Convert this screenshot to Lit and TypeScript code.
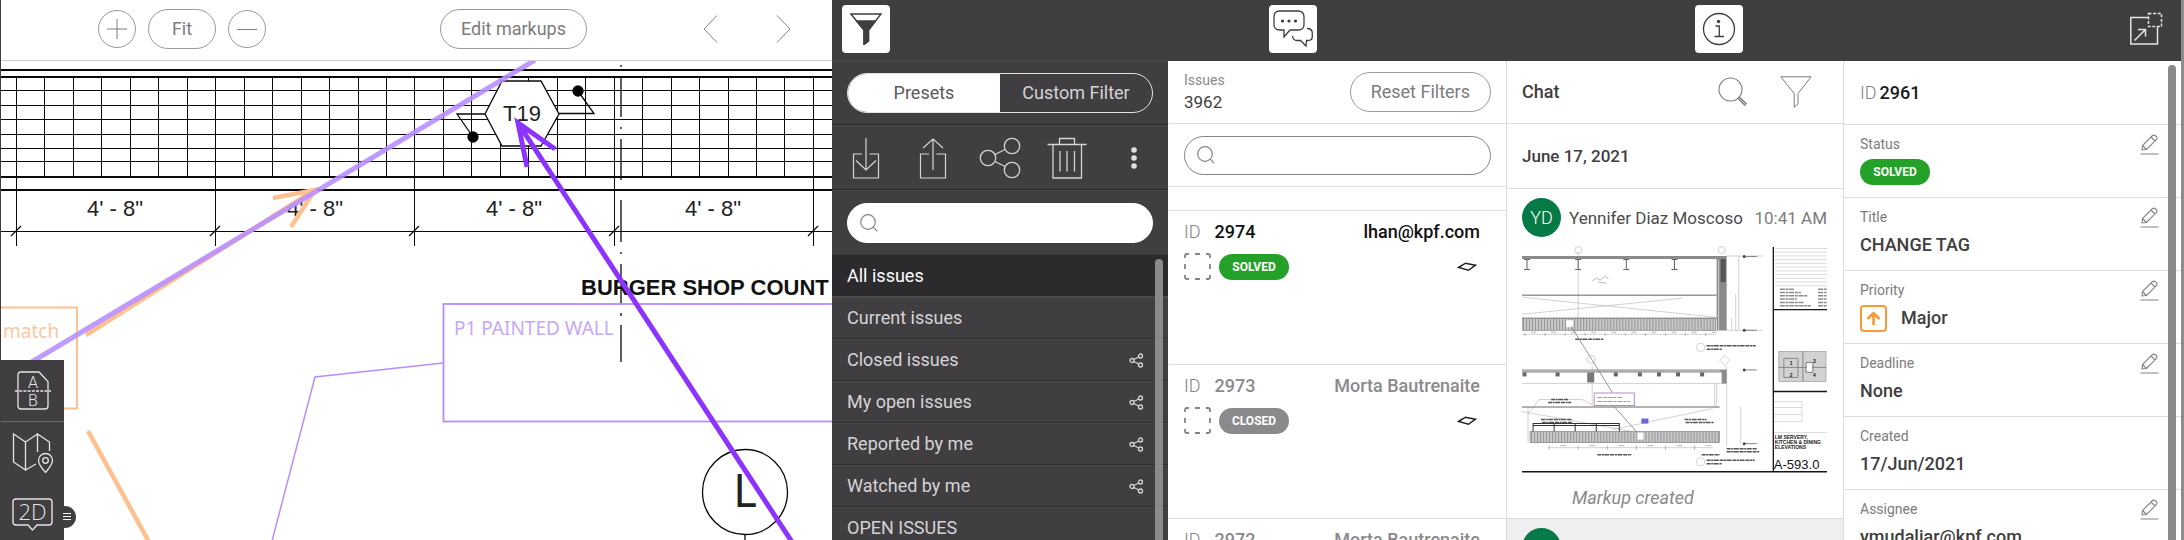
import { LitElement, html, svg, css } from "lit";
import { customElement, state } from "lit/decorators.js";
import { classMap } from "lit/directives/class-map.js";

const icons = {
  filterSolid: html`<svg width="32" height="32" viewBox="0 0 32 32" fill="none" stroke="#3f3d40" stroke-width="1.4">
    <path d="M1 1H31L18.5 17V28L14 31.5V17Z" />
    <path d="M6.5 8H25.5L18.5 17V28L14 31.5V17Z" fill="#3f3d40" />
  </svg>`,
  filter: html`<svg width="32" height="32" viewBox="0 0 32 32" fill="none" stroke="#7d7b7e" stroke-width="1">
    <path d="M.8 .8H31.2L18 17.5V28L14.2 31.2V17.5Z" />
  </svg>`,
  chat: html`<svg width="40" height="38" viewBox="0 0 40 38" fill="none" stroke="#3f3d40" stroke-width="1.3">
    <path d="M6.500 1H25Q31 1 31 7V14.500Q31 20 25 20H17L11 27V20H7Q1 20 1 14.500V7Q1 1 6.500 1Z" />
    <path d="M34 18.500Q39.300 18.500 39.300 23V26.500Q39.300 30.500 35 30.500H33.500L33 36L27.500 30.500H24Q20 30.500 19.500 26" />
    <g fill="#3f3d40" stroke="none"><circle cx="9.500" cy="11" r="1.600" /><circle cx="16" cy="11" r="1.600" /><circle cx="22.500" cy="11" r="1.600" /></g>
  </svg>`,
  info: html`<svg width="34" height="34" viewBox="0 0 34 34" fill="none" stroke="#3f3d40" stroke-width="1.3">
    <circle cx="17" cy="17" r="15.500" /><path d="M13.500 14H17.300V24.500M12.500 24.500H22" /><circle cx="16.500" cy="9.500" r="1.700" fill="#3f3d40" stroke="none" />
  </svg>`,
  expand: html`<svg width="34" height="34" viewBox="0 0 34 34" fill="none" stroke="#e4e2e5" stroke-width="1.500">
    <path d="M19.500 5.500H1.800V32H28.500V14.500" /><path d="M19.500 1.500H32.500V14.500H19.500Z" stroke-dasharray="3 1.600" />
    <path d="M5.500 28.500L16.500 17.500M9 17.500H16.500V24.500" />
  </svg>`,
  download: html`<svg width="28" height="42" viewBox="0 0 28 42" fill="none" stroke="#d5d3d6" stroke-width="1.200">
    <path d="M10 17H1.500V41H26.500V17H17.500M14 1V33M4 23.500L14 33L24 23.500" />
  </svg>`,
  upload: html`<svg width="28" height="42" viewBox="0 0 28 42" fill="none" stroke="#d5d3d6" stroke-width="1.200">
    <path d="M10 17H1.500V41H26.500V17H17.500M14 33V2M4 11L14 2L24 11" />
  </svg>`,
  share: html`<svg width="42" height="42" viewBox="0 0 42 42" fill="none" stroke="#d5d3d6" stroke-width="1.300">
    <circle cx="33" cy="9" r="7.700" /><circle cx="9" cy="21" r="7.700" /><circle cx="33" cy="33" r="7.700" /><path d="M16 17.500L26 12.500M16 24.500L26 29.500" />
  </svg>`,
  shareSmall: html`<svg width="15" height="15" viewBox="0 0 15 15" fill="none" stroke="#d5d3d6" stroke-width="1.300">
    <circle cx="11.500" cy="3" r="2" /><circle cx="3" cy="7.500" r="2" /><circle cx="11.500" cy="12" r="2" /><path d="M4.800 6.500L9.700 4M4.800 8.500L9.700 11" />
  </svg>`,
  trash: html`<svg width="40" height="42" viewBox="0 0 40 42" fill="none" stroke="#d5d3d6" stroke-width="1.300">
    <path d="M.5 7.500H39.500M12.500 7.500V1.500H27.500V7.500M6 7.500V41H34.500V7.500M13 14V34.500M20 14V34.500M27.500 14V34.500" />
  </svg>`,
  more: html`<svg width="8" height="24" viewBox="0 0 8 24" fill="#e0dee1"><circle cx="4" cy="4" r="2.800" /><circle cx="4" cy="12" r="2.800" /><circle cx="4" cy="20" r="2.800" /></svg>`,
  search: html`<svg width="18" height="18" viewBox="0 0 18 18" fill="none" stroke="#858386" stroke-width="1.200">
    <circle cx="8" cy="8" r="7.300" /><path d="M13.200 13.200L17.300 17.300" />
  </svg>`,
  searchBig: html`<svg width="30" height="30" viewBox="0 0 30 30" fill="none" stroke="#7d7b7e" stroke-width="1.100">
    <circle cx="12.500" cy="12.500" r="11.500" /><path d="M20.500 20.500L28 28" stroke-width="3.200" /><path d="M21 21L28 28" stroke="#d6d5d7" stroke-width="1" />
  </svg>`,
  pencil: html`<svg width="19" height="21" viewBox="0 0 19 21" fill="none" stroke="#858386" stroke-width="1.100">
    <path d="M2 16L2.500 11.500L12.500 1.500Q14 .5 15.500 1.800Q17.800 3.500 16.500 5.500L6.500 15.500ZM11 3L15 7M2.500 11.500L6.500 15.500M.5 20H18.500" />
  </svg>`,
  layer: html`<svg width="20" height="10" viewBox="0 0 20 10" fill="none" stroke="#222" stroke-width="1.500"><path d="M1.500 5.500L8.500 1.200L18.500 3.200L11.500 8.300Z" /></svg>`,
  priority: html`<svg width="27" height="27" viewBox="0 0 27 27" fill="none" stroke="#fb9a34" stroke-width="2">
    <rect x="1" y="1" width="25" height="25" rx="3" /><path d="M13.500 20V8.500M7.500 14L13.500 8L19.500 14" stroke-width="2.600" />
  </svg>`,
  frame: html`<svg width="27" height="27" viewBox="0 0 27 27" fill="none" stroke="#858386" stroke-width="1.800">
    <path d="M1 5V3Q1 1 3 1H5M22 1H24Q26 1 26 3V5M26 22V24Q26 26 24 26H22M5 26H3Q1 26 1 24V22M11 1H16M11 26H16M1 11V16M26 11V16" />
  </svg>`,
  plus: html`<svg width="20" height="20" viewBox="0 0 20 20" stroke="#7d7b7e"><path d="M0 10H20M10 0V20" /></svg>`,
  minus: html`<svg width="20" height="20" viewBox="0 0 20 20" stroke="#7d7b7e"><path d="M0 10.500H20" /></svg>`,
  prev: html`<svg width="15" height="28" viewBox="0 0 15 28" fill="none" stroke="#858386"><path d="M14 .5L1 14L14 27.500" /></svg>`,
  next: html`<svg width="15" height="28" viewBox="0 0 15 28" fill="none" stroke="#858386"><path d="M1 .5L14 14L1 27.500" /></svg>`,
  compare: html`<svg width="38" height="40" viewBox="0 0 38 40" fill="none" stroke="#e4e2e5" stroke-width="1.300">
    <path d="M25 1H7Q4 1 4 4V35Q4 38 7 38H31Q34 38 34 35V10.500Z" /><path d="M1 20H37" stroke-dasharray="3 1.200" />
    <g font-family="Roboto, sans-serif" font-size="16" font-weight="300" text-anchor="middle" fill="#e4e2e5" stroke="none"><text x="19" y="16.500">A</text><text x="19" y="35">B</text></g>
  </svg>`,
  map: html`<svg width="42" height="40" viewBox="0 0 42 40" fill="none" stroke="#e4e2e5" stroke-width="1.300">
    <path d="M25.500 19V1L37.500 9V18M25.500 1L13.500 9V37L1.500 29V1L13.500 9M13.500 37L24 31" />
    <path d="M33.500 39.500Q26.500 31.500 26.500 27.500A7 7 0 0 1 40.500 27.500Q40.500 31.500 33.500 39.500Z" /><circle cx="33.500" cy="27.500" r="2.800" />
  </svg>`,
  twoD: html`<svg width="42" height="34" viewBox="0 0 42 34" fill="none" stroke="#e4e2e5" stroke-width="1.400">
    <path d="M4 1H37Q40 1 40 4V24Q40 27 37 27H25L20.500 32L16 27H4Q1 27 1 24V4Q1 1 4 1Z" />
    <text x="20.500" y="22" font-family="Open Sans, sans-serif" font-size="22" font-weight="300" text-anchor="middle" fill="#e4e2e5" stroke="none">2D</text>
  </svg>`,
  menu: html`<svg width="8" height="8" viewBox="0 0 8 8" stroke="#fff" stroke-width="1"><path d="M0 .5H8M0 3.500H8M0 6.500H8" /></svg>`,
};

const range = (n: number) => Array.from({ length: n }, (_, i) => i);

/* Elevation drawing with the markups placed on it. */
@customElement("sheet-canvas")
class SheetCanvas extends LitElement {
  static styles = css`
    :host { display: block; min-height: 0; overflow: hidden; }
    .sheet { display: block; width: 100%; height: 100%; }
    .cad { font-family: "Liberation Sans", Arial, sans-serif; font-size: 22px; fill: #222; }
    .title { font-weight: 700; fill: #111; }
    .axis { font-family: "Noto Sans", sans-serif; font-size: 45px; }
    .note { font-family: "Noto Sans", sans-serif; font-size: 19px; }
  `;

  render() {
    const bays = [16, 215, 414, 614, 813];
    return html`<svg class="sheet" viewBox="1 61 831 479" preserveAspectRatio="xMinYMin slice" role="img" aria-label="Elevation drawing">
      <g stroke="#0a0a0a" stroke-width="1" shape-rendering="crispEdges">
        ${[90, 105, 119, 134, 148, 161, 231].map((y) => svg`<line x1="0" x2="832" y1=${y + 0.5} y2=${y + 0.5} />`)}
        ${range(29).map((i) => { const x = Math.round(16 + i * 28.46) + 0.5; return svg`<line x1=${x} x2=${x} y1="77" y2="176" />`; })}
        ${bays.map((x) => svg`<line x1=${x + 0.5} x2=${x + 0.5} y1="176" y2="246" />`)}
        <g stroke-width="2">
          ${[70, 77, 177, 190].map((y) => svg`<line x1="0" x2="832" y1=${y} y2=${y} />`)}
        </g>
      </g>
      <g stroke="#0a0a0a" stroke-width="1.300">
        ${bays.map((x) => svg`<line x1=${x - 5} x2=${x + 5} y1="236" y2="226" />`)}
        <path d="M621 65V67M621 77V117M621 127V129M621 139V180M621 200V242M621 252V254M621 264V304M621 313V316M621 325V362" />
        <path fill="none" d="M485 114H457L473 137M559 113.500H594L578 91" />
        <path fill="#fff" d="M485 114L502 81H541L559 114L541 146H502Z" />
        <circle cx="473" cy="137" r="5" fill="#000" /><circle cx="578" cy="91" r="5" fill="#000" />
        <circle cx="745" cy="492" r="42.500" fill="none" /><path d="M745 535V540" />
      </g>
      <g class="cad" text-anchor="middle">
        <text x="522" y="121">T19</text>
        ${[115, 315, 514, 713].map((x) => svg`<text x=${x} y="216">4' - 8"</text>`)}
        <text class="axis" x="745" y="507">L</text>
      </g>
      <text class="cad title" x="581" y="295">BURGER SHOP COUNT</text>
      <g fill="none" stroke="#ffc08f">
        <rect x="-20" y="307.500" width="97" height="101" stroke-width="2" />
        <path stroke-width="4.500" d="M86 335L313 191M273 198L315 190L291 227M88 431L149 542" />
      </g>
      <text class="note" x="3" y="338" fill="#ffc6a0">match</text>
      <g fill="none" stroke="#b78dff">
        <path stroke-width="5" stroke-opacity=".88" d="M20 369L535 60" />
        <rect x="443.500" y="304" width="500" height="117.500" stroke-width="1.800" />
        <path stroke-width="1.500" d="M443 363L315 377L272 541" />
      </g>
      <text class="note" x="454" y="335" fill="#c5a8f8">P1 PAINTED WALL</text>
      <path fill="none" stroke="#8c33ff" stroke-width="5" d="M792 542L518 123M555 149L518 123L527 167" />
    </svg>`;
  }
}

/* Small preview of a sheet attached to a chat message. */
@customElement("sheet-preview")
class SheetPreview extends LitElement {
  static styles = css`
    :host { display: block; }
    .preview { display: block; width: 100%; }
    .tiny { font-family: "Liberation Sans", Arial, sans-serif; font-size: 5px; font-weight: 700; fill: #222; }
    .number { font-size: 13px; font-weight: 400; fill: #111; }
  `;

  private hatch(x1: number, x2: number, y1: number, y2: number) {
    const n = Math.floor((x2 - x1) / 3);
    return svg`<rect x=${x1} y=${y1} width=${x2 - x1} height=${y2 - y1} fill="#c9c8ca" stroke="#777" stroke-width=".6" />
      <path stroke="#808080" stroke-width=".7" d=${range(n).map((i) => `M${x1 + i * 3 + 1.5} ${y1}V${y2}`).join("")} />`;
  }

  private scribble(x: number, y: number, w: number) {
    return svg`<path stroke="#555" stroke-width="1.500" stroke-dasharray="4 .6 2 .5 5 .8" d=${`M${x} ${y}h${w}`} />`;
  }

  render() {
    return html`<svg class="preview" viewBox="0 0 304 229" fill="none" role="img" aria-label="Sheet A-593.0">
      <g stroke="#b5b4b6" stroke-width=".6">
        <path d="M56 6V84M0 51L193 71M0 68L160 52M0 88H193M27 201H190M216 10V84M213 48V84M209 71V84M218 160V197M180 84H240M204 10H240M70 120V160M0 137H204M192 137V160M194 137V160M204 120V200M0 165L110 185M90 183L190 162M6 160V196M6 168L17 153H60L70 158" />
        <circle cx="56" cy="4" r="3.500" /><circle cx="199" cy="4" r="3.500" /><circle cx="178" cy="101" r="4" /><circle cx="178" cy="215" r="4" />
        <circle cx="69" cy="113" r="4" /><path d="M202 109l5 5l-5 5l-5 -5z" />
      </g>
      <path fill="#8b8a8c" d="M0 10H204V84H194V13H0ZM0 123H204V137H199V126H0Z" />
      <path fill="#555" d="M198 13H203V36H198Z" />
      <path stroke="#fff" stroke-width=".6" d="M196 14V84M0 124.500H198" />
      ${[5, 56, 104, 152].map((x) => svg`<path stroke="#666" d=${`M${x - 3} 13.500h6M${x} 13.500v10M${x - 3} 23.500h6`} />`)}
      ${[2, 35, 93, 117, 136, 155, 179].map((x) => svg`<rect x=${x - 1.5} y="126" width="4" height="4" fill="#666" />`)}
      <rect x="65" y="126" width="7" height="10" fill="#777" />
      <path stroke="#555" stroke-width=".9" d="M0 49H194M0 72H194M0 160.500H197" />
      ${this.hatch(0, 193, 72, 84)}${this.hatch(8, 197, 185, 196)}
      <path stroke="#333" stroke-width="1" d="M11 185V177H97V185M32 177V185M53 177V185M74 177V185M11 179H97" />
      <g stroke="#888" stroke-width=".6">
        ${range(10).map((i) => svg`<path d=${`M${i * 20 + 3} 86.500v3M${i * 20 + 9} 86h5`} />`)}
        ${range(6).map((i) => svg`<path d=${`M${i * 29 + 27} 199v4M${i * 29 + 38} 199h6`} />`)}
        <path d="M70 35l4 -3l4 2l5 -4l3 3M76 36l8 1" />
      </g>
      ${this.scribble(53, 93, 28)}${this.scribble(75, 208, 34)}${this.scribble(179, 208, 18)}
      ${this.scribble(29, 153, 17)}${this.scribble(26, 156, 23)}${this.scribble(19, 173, 31)}${this.scribble(20, 176, 30)}
      ${this.scribble(162, 173, 22)}${this.scribble(163, 176, 28)}
      ${this.scribble(204, 202, 30)}${this.scribble(204, 205, 33)}
      ${this.scribble(184, 99.500, 49)}${this.scribble(184, 103, 15)}${this.scribble(184, 213.500, 48)}${this.scribble(184, 217, 15)}
      ${[10.5, 84, 123.5, 197].map((y) => svg`<circle cx="221.500" cy=${y} r="1.500" fill="#444" /><path stroke="#777" stroke-width=".9" d=${`M223 ${y}h11`} />`)}
      <rect x="44" y="74" width="7" height="7" fill="#fff" /><rect x="115" y="186" width="6" height="7" fill="#fff" />
      <path stroke="#8f8898" stroke-width=".9" d="M49 80L90 146M91 159L115 186" />
      <rect x="72" y="146.500" width="40" height="12.500" fill="#fff" stroke="#b98ad0" />
      <path stroke="#c07fc4" stroke-width="1.200" stroke-dasharray="5 1 3 1" d="M75 151H101M75 155H108" />
      <rect x="119" y="172" width="7" height="5" fill="#6d66d6" />
      <g stroke="#c4c3c5" stroke-width=".6">
        ${range(11).map((i) => svg`<path d=${`M252 ${2.5 + i * 3.7}H304`} />`)}
        <path d="M251 155H279M251 161H279M251 168H279M251 175H279M279 155V175M251 186H304" />
      </g>
      ${range(6).map((i) => svg`<path stroke="#8d8c8e" stroke-width="1.500" stroke-dasharray="5 .7 3 .6" d=${`M257 ${43 + i * 3.3}h${14 + ((i * 7) % 18)}M295 ${43 + i * 3.3}h9`} />`)}
      <rect x="256" y="105" width="47" height="30" fill="#d2d1d3" stroke="#999" stroke-width=".7" />
      <path stroke="#777" stroke-width=".8" d="M261 112H275V131H261ZM256 121H303M280 105V135M283 116H290V126H283Z" />
      <path fill="#fff" d="M284 117h5v8h-5z" />
      <g class="tiny"><text x="267" y="119">1</text><text x="267" y="131">2</text><text x="290" y="117">3</text><text x="290" y="131">4</text></g>
      <path stroke="#161616" stroke-width="1.300" d="M250.500 1V225M250 63.500H304M250 145H304" />
      <path stroke="#161616" stroke-width="1.600" d="M0 225H304" />
      <g class="tiny"><text x="252" y="192">LM SERVERY,</text><text x="252" y="197">KITCHEN &amp; DINING</text><text x="252" y="202">ELEVATIONS</text></g>
      <text class="tiny number" x="251" y="222">A-593.0</text>
    </svg>`;
  }
}

@customElement("app-root")
class AppRoot extends LitElement {
  @state() private preset = "All issues";

  private presets = [
    { name: "All issues", shared: false },
    { name: "Current issues", shared: false },
    { name: "Closed issues", shared: true },
    { name: "My open issues", shared: true },
    { name: "Reported by me", shared: true },
    { name: "Watched by me", shared: true },
    { name: "OPEN ISSUES", shared: false },
  ];

  private issues = [
    { id: "2974", status: "SOLVED", author: "lhan@kpf.com", active: true },
    { id: "2973", status: "CLOSED", author: "Morta Bautrenaite", active: false },
    { id: "2972", status: "CLOSED", author: "Morta Bautrenaite", active: false },
  ];

  private fields = [
    { label: "Status", value: html`<span class="pill solved">SOLVED</span>`, editable: true },
    { label: "Title", value: "CHANGE TAG", editable: true },
    { label: "Priority", value: html`${icons.priority}<span>Major</span>`, editable: true },
    { label: "Deadline", value: "None", editable: true },
    { label: "Created", value: "17/Jun/2021", editable: false },
    { label: "Assignee", value: "ymudaliar@kpf.com", editable: true },
  ];

  static styles = css`
    :host {
      display: grid;
      grid-template-columns: minmax(0, 1fr) auto;
      height: 100vh;
      overflow: hidden;
      font: 400 18px/24px Roboto, sans-serif;
      color: #3f3d40;
      background: #fff;
      --dark: #403e41;
      --line: #dddce0;
      --grey: #7d7b7e;
    }
    * { box-sizing: border-box; }
    svg { display: block; flex: none; }
    button {
      display: flex; align-items: center; justify-content: center;
      padding: 0; border: 0; background: none; font: inherit; color: inherit; cursor: pointer;
    }

    .viewer { position: relative; display: grid; grid-template-rows: 61px minmax(0, 1fr); min-width: 0; min-height: 0; border-left: 1px solid var(--dark); }
    .viewer-bar { display: flex; align-items: center; padding: 0 41px 2px 97px; border-bottom: 1px solid #cfcdd1; }
    .zoom { display: flex; align-items: center; gap: 12px; }
    .nav { display: flex; gap: 58px; }
    .space-l { flex: 3; }
    .space-r { flex: 2; }
    .round { width: 38px; height: 38px; border: 1px solid #9b999c; border-radius: 50%; }
    .outline { height: 40px; padding: 0 20px; border: 1px solid #9b999c; border-radius: 20px; color: var(--grey); white-space: nowrap; }
    .fit { width: 68px; }

    .tools { position: absolute; left: 0; bottom: 0; width: 63px; height: 180px; background: var(--dark); }
    .tool { width: 100%; height: 62px; }
    .tool.first { border-bottom: 1px solid #6b696c; }
    .tool.last { height: 64px; padding-bottom: 2px; }
    .handle { position: absolute; left: 53px; bottom: 12px; width: 22px; height: 22px; padding-left: 4px; border-radius: 50%; background: var(--dark); }

    .side { display: grid; grid-template-rows: 61px minmax(0, 1fr); min-height: 0; border-right: 3px solid #8e8c8f; }
    .side-bar { display: flex; align-items: center; justify-content: space-between; padding: 0 11px 4px 10px; background: var(--dark); }
    .tab { width: 48px; height: 48px; border-radius: 4px; }
    .tab.on { background: #fff; }
    .panels { display: grid; grid-template-columns: 337px 338px 337px 337px; min-height: 0; }
    .panel { position: relative; min-height: 0; overflow: hidden; border-right: 1px solid var(--line); }
    .bar { display: flex; align-items: center; justify-content: space-between; height: 63px; padding: 0 15px; border-bottom: 1px solid var(--line); }
    .thumb { position: absolute; top: 4px; right: 5px; bottom: 0; width: 8px; border-radius: 4px 4px 0 0; background: #8b898c; }

    .presets { background: var(--dark); color: #d5d3d6; border-right-color: #fff; }
    .presets .bar { height: 64px; border-color: #2b292c; border-top: 1px solid #4b494c; }
    .presets .bar.actions { height: 65px; padding: 0; }
    .actions button { flex: 1; }
    .presets .bar.find { height: 65px; border-bottom: 0; }
    .toggle { display: flex; width: 100%; height: 40px; border: 1px solid #e4e2e5; border-radius: 20px; overflow: hidden; }
    .toggle button { flex: 1; }
    .toggle .on { background: #fff; color: #5b595c; }
    .search { display: flex; align-items: center; gap: 8px; width: 100%; height: 40px; padding: 0 12px; border-radius: 20px; background: #fff; border: 1px solid #fff; }
    .search.lined { border-color: #858386; height: 39px; }
    .search input { flex: 1; min-width: 0; border: 0; outline: 0; background: none; font: inherit; }
    .list { margin: 0; padding: 0; list-style: none; }
    .item { width: 100%; height: 42px; padding: 0 24px 0 15px; justify-content: space-between; border-top: 1px solid #4b494c; border-bottom: 1px solid #2f2d30; }
    .item.on { background: #2c2a2d; color: #fff; border-top-color: #2c2a2d; border-bottom-color: #4b494c; }
    .preset-scroll { position: relative; }

    .count { display: flex; flex-direction: column; }
    .small { font-size: 14px; line-height: 20px; color: #8b898c; }
    .count b { font-size: 17px; font-weight: 400; }
    .strip { height: 24px; border-bottom: 1px solid var(--line); }
    .issue { display: flex; flex-direction: column; gap: 9px; height: 154px; padding: 9px 26px 0 15px; border-bottom: 1px solid var(--line); color: #8b898c; }
    .issue.active .strong { color: #111; }
    .row { display: flex; align-items: center; gap: 8px; }
    .light { font-weight: 300; color: #858386; }
    .strong { font-weight: 500; }
    .id-no { margin-left: 6px; }
    .end { margin-left: auto; }
    .layer { margin-right: 3px; }
    .pill { display: inline-flex; align-items: center; justify-content: center; width: 70px; height: 26px; border-radius: 13px; font-size: 12px; font-weight: 700; color: #fff; background: #8b898c; }
    .pill.solved { background: #24a128; }

    .chat-head { font-weight: 500; }
    .chat-icons { display: flex; align-items: center; gap: 32px; padding-right: 16px; }
    .date { height: 65px; font-size: 17px; font-weight: 500; }
    .message { padding: 9px 16px 8px 15px; border-bottom: 1px solid var(--line); }
    .message.next { background: #efeef1; border: 0; height: 100px; }
    .who { display: flex; align-items: center; gap: 8px; white-space: nowrap; margin-bottom: 9px; font-size: 17px; }
    .avatar { display: flex; flex: none; align-items: center; justify-content: center; width: 39px; height: 39px; border-radius: 50%; background: #067a46; color: #fff; font-size: 18px; font-weight: 300; }
    .name { color: #4c4a4d; }
    .time { margin-left: auto; color: var(--grey); }
    .event { margin: 10px 0 0 50px; font-style: italic; color: #8b898c; }

    .details { border-right: 0; }
    .details .bar { height: 64px; padding: 0 16px; justify-content: flex-start; gap: 3px; }
    .details .strong { color: #1b1a1c; }
    .fields { margin: 0; }
    .field { display: grid; grid-template-columns: 1fr auto; grid-template-rows: 20px 26px; row-gap: 5px; height: 73px; padding: 9px 22px 0 16px; border-bottom: 1px solid var(--line); }
    .field dt { font-size: 14px; line-height: 20px; color: var(--grey); }
    .field dd { grid-column: 1; grid-row: 2; display: flex; align-items: center; gap: 14px; height: 26px; margin: 0; font-weight: 500; }
  `;

  private search(lined: boolean, label: string) {
    return html`<label class=${classMap({ search: true, lined })}>${icons.search}<input type="text" aria-label=${label} /></label>`;
  }

  render() {
    return html`
      <main class="viewer">
        <div class="viewer-bar">
          <div class="zoom">
            <button class="round" aria-label="Zoom in">${icons.plus}</button>
            <button class="outline fit">Fit</button>
            <button class="round" aria-label="Zoom out">${icons.minus}</button>
          </div>
          <span class="space-l"></span>
          <button class="outline">Edit markups</button>
          <span class="space-r"></span>
          <div class="nav">
            <button aria-label="Previous">${icons.prev}</button>
            <button aria-label="Next">${icons.next}</button>
          </div>
        </div>
        <sheet-canvas></sheet-canvas>
        <div class="tools">
          <button class="tool first" aria-label="Compare sheets">${icons.compare}</button>
          <button class="tool" aria-label="Map">${icons.map}</button>
          <button class="tool last" aria-label="2D view">${icons.twoD}</button>
          <button class="handle" aria-label="Menu">${icons.menu}</button>
        </div>
      </main>

      <div class="side">
        <header class="side-bar">
          <button class="tab on" aria-label="Filters">${icons.filterSolid}</button>
          <button class="tab on" aria-label="Chat">${icons.chat}</button>
          <button class="tab on" aria-label="Details">${icons.info}</button>
          <button class="tab" aria-label="Expand">${icons.expand}</button>
        </header>
        <div class="panels">
          <section class="panel presets">
            <div class="bar">
              <div class="toggle">
                <button class="on" aria-pressed="true">Presets</button>
                <button aria-pressed="false">Custom Filter</button>
              </div>
            </div>
            <div class="bar actions">
              <button aria-label="Import">${icons.download}</button>
              <button aria-label="Export">${icons.upload}</button>
              <button aria-label="Share">${icons.share}</button>
              <button aria-label="Delete">${icons.trash}</button>
              <button aria-label="More">${icons.more}</button>
            </div>
            <div class="bar find">${this.search(false, "Search presets")}</div>
            <div class="preset-scroll">
              <ul class="list">
                ${this.presets.map((p) => html`<li>
                  <button class=${classMap({ item: true, on: p.name === this.preset })} @click=${() => (this.preset = p.name)}>
                    <span>${p.name}</span>${p.shared ? icons.shareSmall : ""}
                  </button>
                </li>`)}
              </ul>
              <div class="thumb"></div>
            </div>
          </section>

          <section class="panel">
            <div class="bar">
              <div class="count"><span class="small">Issues</span><b>3962</b></div>
              <button class="outline">Reset Filters</button>
            </div>
            <div class="bar">${this.search(true, "Search issues")}</div>
            <div class="strip"></div>
            ${this.issues.map((i) => html`<article class=${classMap({ issue: true, active: i.active })}>
              <div class="row">
                <span class="light">ID</span><span class="strong id-no">${i.id}</span><span class="strong end">${i.author}</span>
              </div>
              <div class="row">
                ${icons.frame}<span class=${classMap({ pill: true, solved: i.status === "SOLVED" })}>${i.status}</span>
                <span class="end layer">${icons.layer}</span>
              </div>
            </article>`)}
          </section>

          <section class="panel">
            <div class="bar chat-head">
              <span>Chat</span>
              <div class="chat-icons">
                <button aria-label="Search chat">${icons.searchBig}</button>
                <button aria-label="Filter chat">${icons.filter}</button>
              </div>
            </div>
            <div class="bar date">June 17, 2021</div>
            <article class="message">
              <div class="who"><span class="avatar">YD</span><span class="name">Yennifer Diaz Moscoso</span><span class="time">10:41 AM</span></div>
              <sheet-preview></sheet-preview>
              <div class="event">Markup created</div>
            </article>
            <article class="message next"><div class="who"><span class="avatar"></span></div></article>
          </section>

          <section class="panel details">
            <div class="bar"><span class="light">ID</span><span class="strong">2961</span></div>
            <dl class="fields">
              ${this.fields.map((f) => html`<div class="field">
                <dt>${f.label}</dt>
                <dd>${f.value}</dd>
                ${f.editable ? html`<button aria-label="Edit ${f.label}">${icons.pencil}</button>` : ""}
              </div>`)}
            </dl>
            <div class="thumb"></div>
          </section>
        </div>
      </div>
    `;
  }
}
